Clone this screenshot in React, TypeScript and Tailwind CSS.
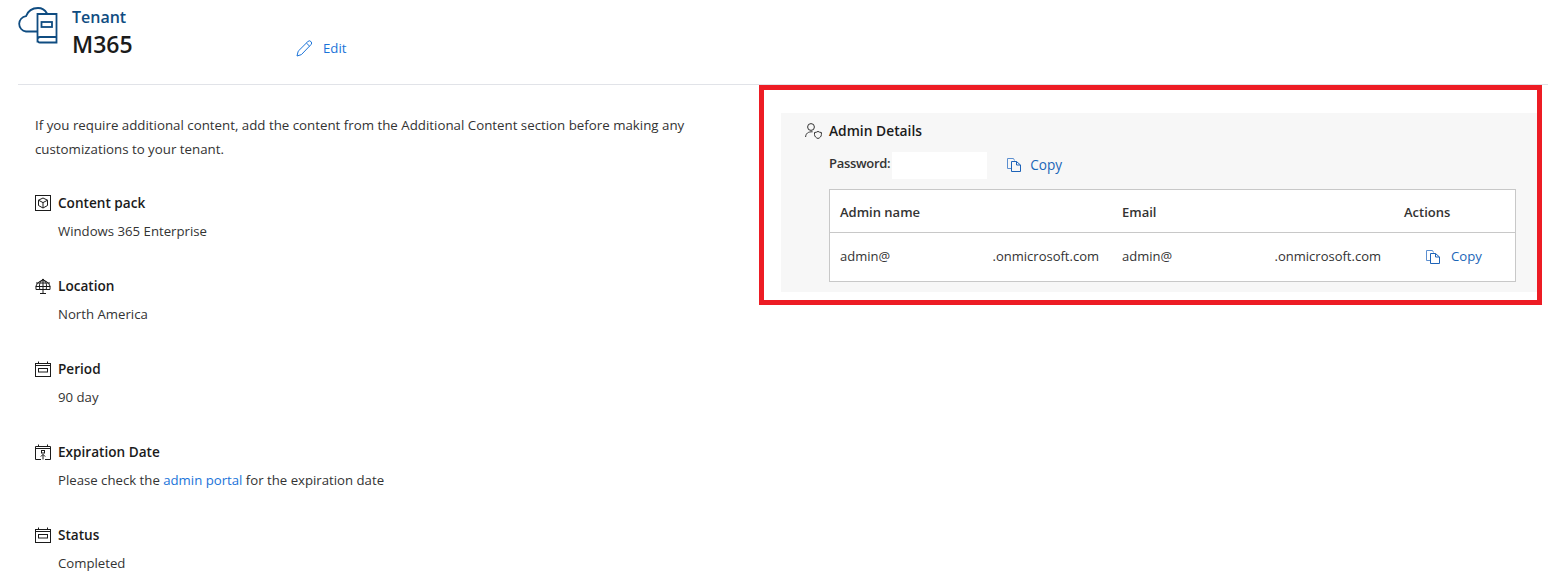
const font = { fontFamily: '"Open Sans", "Noto Sans", sans-serif' };

function TenantIcon() {
  return (
    <svg width="42" height="38" viewBox="0 0 42 38" fill="none" stroke="#0f4c81" strokeWidth="1.8">
      <path d="M19 24.5 H8 A7.7 7.7 0 0 1 8 9.2 C10 4 14.5 1 20 1 C24 1 27 3 29 6.5" />
      <path d="M19.5 35.5 V7 H38.5 V35.5 H22 A2.6 2.6 0 0 1 19.5 32.5 A2.6 2.6 0 0 1 22 30 H38.5" fill="#fff" />
      <rect x="23.5" y="15" width="10.5" height="5" />
    </svg>
  );
}

function PencilIcon() {
  return (
    <svg width="17" height="17" viewBox="0 0 17 17" fill="none" stroke="#1a73d9" strokeWidth="1">
      <path d="M1 16 L2.2 11.2 L11.8 1.6 A1.9 1.9 0 0 1 15 4.6 L5.4 14.6 Z" />
      <path d="M10.4 3 L13.6 6.2" />
    </svg>
  );
}

function BoxIcon() {
  return (
    <svg width="16" height="16" viewBox="0 0 16 16" fill="none" stroke="#1b1b1b" strokeWidth="1">
      <rect x="0.5" y="0.5" width="15" height="15" />
      <path d="M8 3 L12.5 5.2 V10.5 L8 13 L3.5 10.5 V5.2 Z M3.5 5.2 L8 7.6 L12.5 5.2 M8 7.6 V13" />
    </svg>
  );
}

function GlobeIcon() {
  return (
    <svg width="16" height="16" viewBox="0 0 16 16" fill="none" stroke="#1b1b1b" strokeWidth="1">
      <path d="M1 11.5 A7.2 7.2 0 1 1 15 11.5 Z" />
      <path d="M1 5 H15 M0.8 8.5 H15.2 M8 1 V11.5 M4.8 11.5 C4 7 4.5 3.5 8 1 C11.5 3.5 12 7 11.2 11.5 M8 11.5 V15.5 M5 15.5 H11" />
    </svg>
  );
}

function CalendarIcon() {
  return (
    <svg width="16" height="16" viewBox="0 0 16 16" fill="none" stroke="#1b1b1b" strokeWidth="1">
      <rect x="0.5" y="2.5" width="15" height="13" />
      <path d="M0.5 4.5 H15.5 M3.5 0.5 V2.5 M12.5 0.5 V2.5" />
      <rect x="3.5" y="7.5" width="9" height="3.5" />
    </svg>
  );
}

function ExpiryIcon() {
  return (
    <svg width="16" height="16" viewBox="0 0 16 16" fill="none" stroke="#1b1b1b" strokeWidth="1">
      <path d="M6 15.5 H0.5 V2.5 H15.5 V15.5 H10" />
      <path d="M0.5 4.5 H15.5 M3.5 0.5 V2.5 M12.5 0.5 V2.5 M8 15.5 V10.5 M5.8 12.6 L8 10.4 L10.2 12.6" />
      <rect x="6.5" y="6.5" width="3" height="2.5" />
    </svg>
  );
}

function AdminIcon() {
  return (
    <svg width="17" height="16" viewBox="0 0 17 16" fill="none" stroke="#333" strokeWidth="1">
      <circle cx="6" cy="4" r="3.4" />
      <path d="M0.6 14 C0.8 10.5 3 8.6 7.6 8.8" />
      <path d="M9.5 9.5 C10.8 9.5 12 9.1 13 8.4 C14 9.1 15.2 9.5 16.4 9.5 V11.5 C16.4 13.5 15 14.8 13 15.5 C11 14.8 9.5 13.5 9.5 11.5 Z" />
    </svg>
  );
}

function CopyIcon() {
  return (
    <svg width="14" height="14" viewBox="0 0 14 14" fill="none" stroke="#1d63b8" strokeWidth="1">
      <path d="M4.5 10.5 H0.5 V0.5 H6.5 L7.5 2.5" stroke="#5c8fd0" />
      <path d="M4.5 3.5 H9.5 L13.5 7 V13.5 H4.5 Z" />
      <path d="M9.5 3.5 V7 H13.5" />
    </svg>
  );
}

function InfoItem({ icon, label, children }: { icon: React.ReactNode; label: string; children: React.ReactNode }) {
  return (
    <div className="h-[83px]">
      <div className="flex h-[20px] items-center gap-[7px] text-[13.6px] font-semibold text-[#1b1b1b]">
        {icon}
        <span>{label}</span>
      </div>
      <div className="mt-[8px] pl-[23px] text-[13.2px] leading-[20px] text-[#333]">{children}</div>
    </div>
  );
}

export default function App() {
  return (
    <div className="relative h-[578px] w-[1548px] overflow-hidden bg-white" style={font}>
      {/* header */}
      <div className="ml-[18px] flex h-[85px] border-b border-[#e1e3e8]">
        <div className="pt-[7px]">
          <TenantIcon />
        </div>
        <div className="ml-[12px] w-[224px] pt-[5px]">
          <div className="text-[16px] leading-[24px] font-semibold text-[#0f4c81]">Tenant</div>
          <div className="text-[23px] leading-[30px] font-semibold text-[#1b1b1b]">M365</div>
        </div>
        <div className="flex h-[97px] items-center gap-[10px] text-[13.2px] text-[#1a73d9]">
          <PencilIcon />
          <span>Edit</span>
        </div>
      </div>

      <div className="flex">
        {/* left details */}
        <div className="w-[781px] shrink-0 pl-[35px] pt-[28px]">
          <p className="w-[690px] text-[13.3px] leading-[24px] text-[#333]">
            If you require additional content, add the content from the Additional Content section before making any customizations to your tenant.
          </p>
          <div className="mt-[32px]">
            <InfoItem icon={<BoxIcon />} label="Content pack">Windows 365 Enterprise</InfoItem>
            <InfoItem icon={<GlobeIcon />} label="Location">North America</InfoItem>
            <InfoItem icon={<CalendarIcon />} label="Period">90 day</InfoItem>
            <InfoItem icon={<ExpiryIcon />} label="Expiration Date">
              Please check the <a href="#" className="text-[#1a73d9]">admin portal</a> for the expiration date
            </InfoItem>
            <InfoItem icon={<CalendarIcon />} label="Status">Completed</InfoItem>
          </div>
        </div>

        {/* admin details */}
        <div className="mt-[28px] h-[179px] w-[756px] shrink-0 bg-[#f7f7f7] pl-[24px] pt-[10px]">
          <div className="flex h-[16px] items-center gap-[7px] text-[13.8px] font-semibold text-[#1b1b1b]">
            <AdminIcon />
            <span>Admin Details</span>
          </div>
          <div className="ml-[24px] mt-[13px] flex h-[27px] items-center">
            <span className="mb-[3px] text-[13px] font-semibold tracking-[-0.3px] text-[#333]">Password:</span>
            <div className="ml-[2px] h-[27px] w-[95px] bg-white" />
            <button className="mb-[1px] ml-[20px] flex items-center gap-[9px] text-[13.6px] text-[#1a66b8]">
              <CopyIcon />
              <span>Copy</span>
            </button>
          </div>
          <div className="ml-[24px] mt-[10px] w-[687px] border border-[#c8c8c8] bg-white text-[13px] text-[#333]">
            <div className="grid h-[43px] grid-cols-[282px_282px_1fr] items-center border-b border-[#c8c8c8] pl-[10px] pt-[3px] font-semibold">
              <span>Admin name</span>
              <span>Email</span>
              <span>Actions</span>
            </div>
            <div className="grid h-[48px] grid-cols-[282px_282px_1fr] items-center pl-[10px]">
              <div className="flex w-[259px] justify-between">
                <span>admin@</span>
                <span>.onmicrosoft.com</span>
              </div>
              <div className="flex w-[259px] justify-between">
                <span>admin@</span>
                <span>.onmicrosoft.com</span>
              </div>
              <div className="pl-[22px]">
                <button className="flex items-center gap-[11px] text-[13.2px] text-[#1a66b8]">
                  <CopyIcon />
                  <span>Copy</span>
                </button>
              </div>
            </div>
          </div>
        </div>
      </div>

      {/* red highlight annotation */}
      <div className="absolute left-[759px] top-[85px] h-[220px] w-[783px] border-[5px] border-[#ed1c24]" />
    </div>
  );
}
